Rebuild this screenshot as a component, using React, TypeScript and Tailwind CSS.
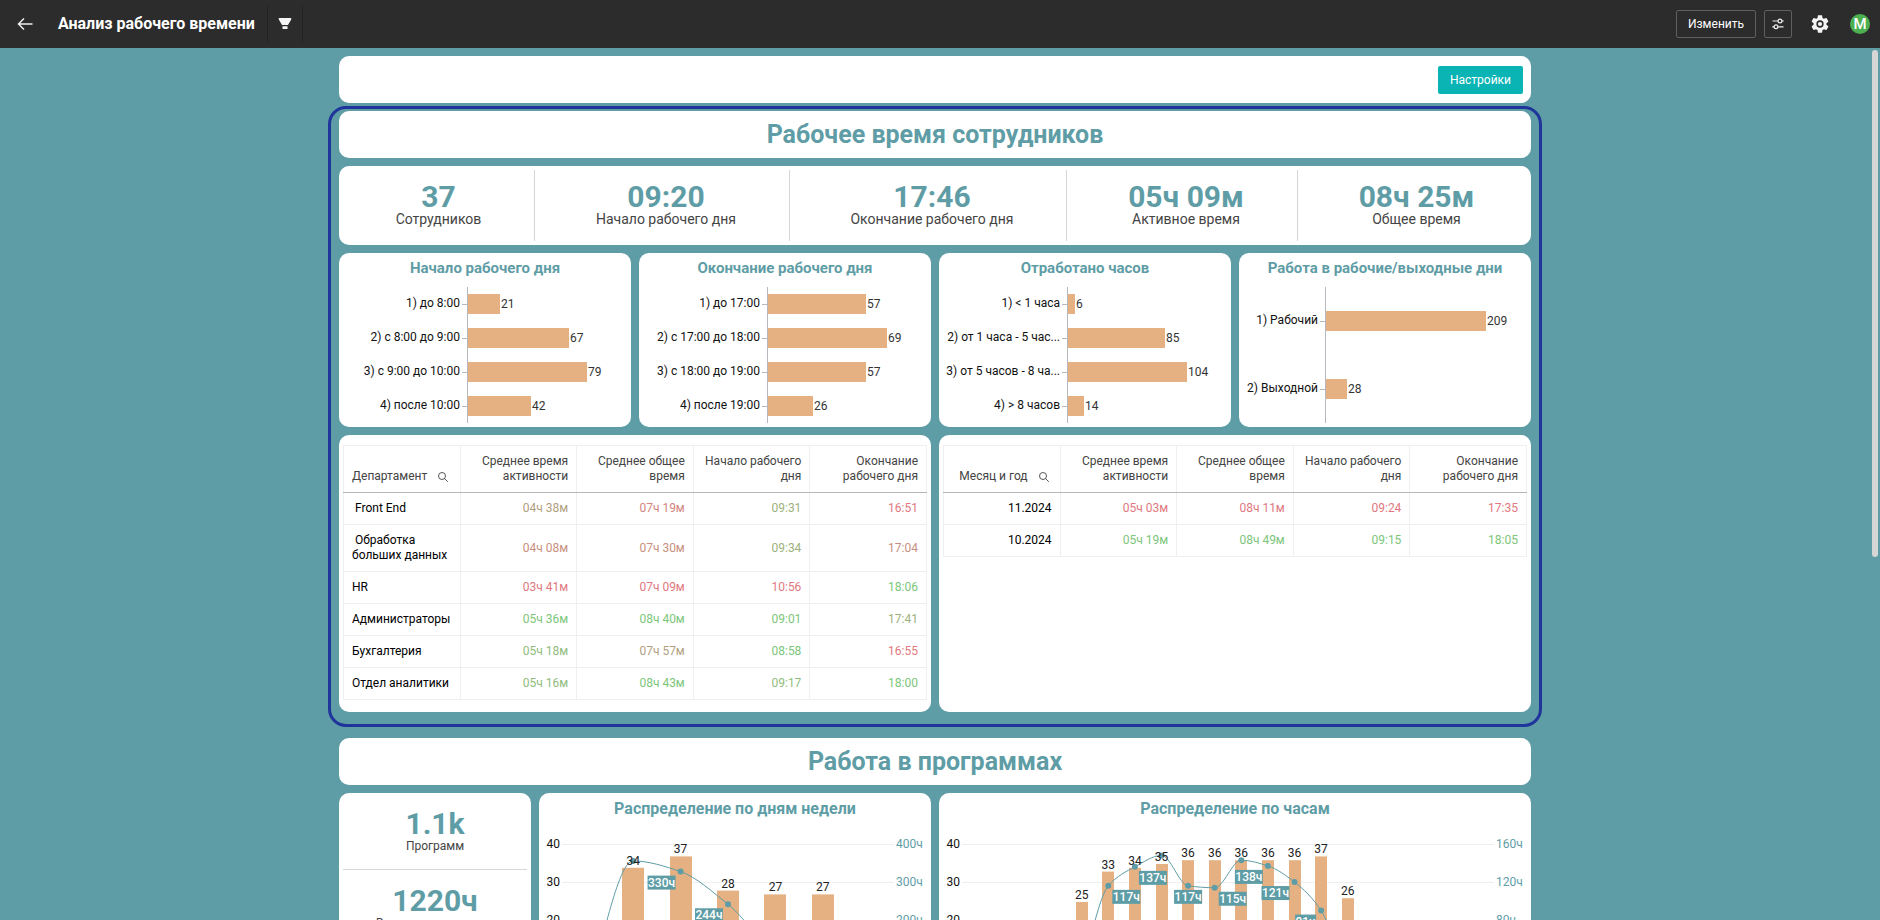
import { ReactNode } from "react";

interface BarItem {
  label: string;
  value: number;
}

interface LinePoint {
  band: number;
  value: number;
  label?: string;
  side?: "left" | "center" | "right";
}

const TEAL = "#5f9da6";
const SAND = "#e6b182";

const stats = [
  { value: "37", label: "Сотрудников" },
  { value: "09:20", label: "Начало рабочего дня" },
  { value: "17:46", label: "Окончание рабочего дня" },
  { value: "05ч 09м", label: "Активное время" },
  { value: "08ч 25м", label: "Общее время" },
];

const barCharts: { title: string; axis: number; span: number; items: BarItem[] }[] = [
  {
    title: "Начало рабочего дня",
    axis: 128,
    span: 119,
    items: [
      { label: "1) до 8:00", value: 21 },
      { label: "2) с 8:00 до 9:00", value: 67 },
      { label: "3) с 9:00 до 10:00", value: 79 },
      { label: "4) после 10:00", value: 42 },
    ],
  },
  {
    title: "Окончание рабочего дня",
    axis: 128,
    span: 119,
    items: [
      { label: "1) до 17:00", value: 57 },
      { label: "2) с 17:00 до 18:00", value: 69 },
      { label: "3) с 18:00 до 19:00", value: 57 },
      { label: "4) после 19:00", value: 26 },
    ],
  },
  {
    title: "Отработано часов",
    axis: 128,
    span: 119,
    items: [
      { label: "1) < 1 часа", value: 6 },
      { label: "2) от 1 часа - 5 час...", value: 85 },
      { label: "3) от 5 часов - 8 ча...", value: 104 },
      { label: "4) > 8 часов", value: 14 },
    ],
  },
  {
    title: "Работа в рабочие/выходные дни",
    axis: 86,
    span: 160,
    items: [
      { label: "1) Рабочий", value: 209 },
      { label: "2) Выходной", value: 28 },
    ],
  },
];

const tones = {
  red: "text-[#e17880]",
  rose: "text-[#d4837e]",
  clay: "text-[#c98f80]",
  sand: "text-[#b0a080]",
  olive: "text-[#9cb27c]",
  moss: "text-[#8fbc7d]",
  green: "text-[#7cc67a]",
};

type Tone = keyof typeof tones;
type Row = { name: string; cells: [string, Tone][] };

const departments: Row[] = [
  { name: " Front End", cells: [["04ч 38м", "sand"], ["07ч 19м", "rose"], ["09:31", "olive"], ["16:51", "red"]] },
  { name: " Обработка больших данных", cells: [["04ч 08м", "clay"], ["07ч 30м", "clay"], ["09:34", "olive"], ["17:04", "clay"]] },
  { name: "HR", cells: [["03ч 41м", "red"], ["07ч 09м", "red"], ["10:56", "red"], ["18:06", "green"]] },
  { name: "Администраторы", cells: [["05ч 36м", "green"], ["08ч 40м", "green"], ["09:01", "green"], ["17:41", "olive"]] },
  { name: "Бухгалтерия", cells: [["05ч 18м", "moss"], ["07ч 57м", "sand"], ["08:58", "green"], ["16:55", "red"]] },
  { name: "Отдел аналитики", cells: [["05ч 16м", "moss"], ["08ч 43м", "green"], ["09:17", "moss"], ["18:00", "green"]] },
];

const months: Row[] = [
  { name: "11.2024", cells: [["05ч 03м", "red"], ["08ч 11м", "red"], ["09:24", "red"], ["17:35", "red"]] },
  { name: "10.2024", cells: [["05ч 19м", "green"], ["08ч 49м", "green"], ["09:15", "green"], ["18:05", "green"]] },
];

const weekBars = [0, 34, 37, 28, 27, 27, 0];
const weekLine: LinePoint[] = [
  { band: 0, value: 4 },
  { band: 1, value: 358 },
  { band: 2, value: 330, label: "330ч", side: "left" },
  { band: 3, value: 244, label: "244ч", side: "left" },
  { band: 4, value: 130 },
  { band: 5, value: 110 },
  { band: 6, value: 4 },
];

const hourBars = [0, 0, 0, 0, 25, 33, 34, 35, 36, 36, 36, 36, 36, 37, 26, 0, 0, 0, 0, 0];
const hourLine: LinePoint[] = [
  { band: 4, value: 30 },
  { band: 5, value: 117, label: "117ч", side: "right" },
  { band: 6, value: 137, label: "137ч", side: "right" },
  { band: 7, value: 149 },
  { band: 8, value: 117, label: "117ч", side: "center" },
  { band: 9, value: 115, label: "115ч", side: "right" },
  { band: 10, value: 144 },
  { band: 11, value: 138, label: "138ч", side: "left" },
  { band: 12, value: 121, label: "121ч", side: "left" },
  { band: 13, value: 91, label: "91ч", side: "left" },
  { band: 14, value: 20 },
];

function Card({ className = "", children }: { className?: string; children?: ReactNode }) {
  return <div className={`rounded-[10px] bg-white ${className}`}>{children}</div>;
}

function SectionTitle({ children }: { children: ReactNode }) {
  return (
    <Card className="flex h-[47px] items-center justify-center">
      <h2 className="text-[25px] leading-8 font-bold text-[#5f9da6]">{children}</h2>
    </Card>
  );
}

function ChartTitle({ large, children }: { large?: boolean; children: ReactNode }) {
  return (
    <h3
      className={`text-center font-bold text-[#5f9da6] ${large ? "h-[31px] text-[16px] leading-8" : "h-[30px] text-[15px] leading-[30px]"}`}
    >
      {children}
    </h3>
  );
}

function BigValue({ children }: { children: ReactNode }) {
  return <div className="text-[30px] leading-[29px] font-bold text-[#5f9da6]">{children}</div>;
}

function BarChart({ axis, span, items }: { axis: number; span: number; items: BarItem[] }) {
  const max = Math.max(...items.map((i) => i.value));
  const band = 136 / items.length;

  return (
    <svg viewBox="0 0 292 144" className="block w-full text-xs">
      {items.map((item, i) => {
        const mid = Math.round(4 + band * (i + 0.5));
        const width = Math.round((item.value / max) * span);
        return (
          <g key={item.label}>
            <rect x={axis - 5} y={mid} width={5} height={1} fill="#b5b8bf" />
            <text x={axis - 7} y={mid + 3} textAnchor="end" fill="#111">
              {item.label}
            </text>
            <rect x={axis + 1} y={mid - 10} width={width} height={20} fill={SAND} />
            <text x={axis + width + 2} y={mid + 4} fill="#333">
              {item.value}
            </text>
          </g>
        );
      })}
      <rect x={axis} y={4} width={1} height={136} fill="#b5b8bf" />
    </svg>
  );
}

// monotone cubic through the points, so the curve never overshoots a peak
function smoothPath(pts: [number, number][]) {
  const slopes = pts.slice(1).map(([x, y], i) => (y - pts[i][1]) / (x - pts[i][0]));
  const tangents = pts.map((_, i) => {
    const a = slopes[i - 1];
    const b = slopes[i];
    if (a === undefined) return b;
    if (b === undefined) return a;
    return a * b <= 0 ? 0 : (2 * a * b) / (a + b);
  });
  return pts
    .map(([x, y], i) => {
      if (i === 0) return `M${x},${y}`;
      const [px, py] = pts[i - 1];
      const d = (x - px) / 3;
      return `C${px + d},${py + tangents[i - 1] * d} ${x - d},${y - tangents[i] * d} ${x},${y}`;
    })
    .join(" ");
}

interface ComboProps {
  width: number;
  bars: number[];
  barWidth: number;
  line: LinePoint[];
  lineStep: number;
}

function ComboChart({ width, bars, barWidth, line, lineStep }: ComboProps) {
  const left = 23;
  const right = width - 37;
  const band = (right - left) / bars.length;
  const cx = (i: number) => left + band * (i + 0.5);
  const yBar = (v: number) => 173 - v * 3.8;
  const yLine = (v: number) => 173 - (v / lineStep) * 38;

  return (
    <svg viewBox={`0 0 ${width} 200`} className="block w-full text-xs">
      {[40, 30, 20, 10, 0].map((v) => (
        <g key={v}>
          <rect x={left} y={yBar(v) - 1} width={right - left} height={1} fill="#efefef" />
          <text x={left - 2} y={yBar(v) + 3} textAnchor="end" fill="#111">
            {v}
          </text>
          <text x={right + 2} y={yBar(v) + 3} fill={TEAL}>
            {(v / 10) * lineStep}ч
          </text>
        </g>
      ))}
      {bars.map((v, i) =>
        v > 0 ? (
          <rect
            key={i}
            x={Math.round(cx(i) - barWidth / 2)}
            y={yBar(v)}
            width={barWidth}
            height={v * 3.8}
            fill={SAND}
          />
        ) : null,
      )}
      <path
        d={smoothPath(line.map((p) => [cx(p.band), yLine(p.value)]))}
        fill="none"
        stroke={TEAL}
      />
      {line.map((p) => (
        <circle key={p.band} cx={cx(p.band)} cy={yLine(p.value)} r={3} fill={TEAL} />
      ))}
      {bars.map((v, i) =>
        v > 0 ? (
          <text key={i} x={cx(i)} y={yBar(v) - 3} textAnchor="middle" fill="#222">
            {v}
          </text>
        ) : null,
      )}
      {line.map((p) => {
        if (!p.label) return null;
        const w = p.label.length * 7;
        const x = cx(p.band);
        const bx = p.side === "left" ? x - 5 - w : p.side === "right" ? x + 4 : x - w / 2;
        const by = yLine(p.value) + 4;
        return (
          <g key={p.band}>
            <rect x={bx} y={by} width={w} height={14} fill={TEAL} />
            <text x={bx + w / 2} y={by + 11} textAnchor="middle" fill="#fff" className="font-medium">
              {p.label}
            </text>
          </g>
        );
      })}
    </svg>
  );
}

function SearchIcon() {
  return (
    <svg viewBox="0 0 10 10" className="mr-[3px] size-[10px]" fill="none" stroke="#555">
      <circle cx="4" cy="4" r="3.5" />
      <path d="M6.5 6.5 9.8 9.8" />
    </svg>
  );
}

function TimeTable({ heading, rows, alignEnd }: { heading: string; rows: Row[]; alignEnd?: boolean }) {
  const cell = "border border-[#efefef] px-2 py-2";
  const columns = [
    "Среднее время активности",
    "Среднее общее время",
    "Начало рабочего дня",
    "Окончание рабочего дня",
  ];

  return (
    <table className="w-full table-fixed border-collapse text-xs leading-[15px]">
      <thead>
        <tr className="align-bottom text-[#444]">
          <th className={`${cell} border-b-[#b4b8b8] font-normal`}>
            <span className={`flex items-center gap-[11px] ${alignEnd ? "justify-end" : ""}`}>
              {heading}
              <SearchIcon />
            </span>
          </th>
          {columns.map((c) => (
            <th key={c} className={`${cell} border-b-[#b4b8b8] text-right font-normal`}>
              {c}
            </th>
          ))}
        </tr>
      </thead>
      <tbody>
        {rows.map((row) => (
          <tr key={row.name}>
            <td className={`${cell} whitespace-pre-wrap text-black ${alignEnd ? "text-right" : ""}`}>
              {row.name}
            </td>
            {row.cells.map(([text, tone], i) => (
              <td key={i} className={`${cell} text-right ${tones[tone]}`}>
                {text}
              </td>
            ))}
          </tr>
        ))}
      </tbody>
    </table>
  );
}

function Header() {
  return (
    <header className="flex h-12 shrink-0 items-center bg-[#2c2c2c] pr-[10px] pl-4 text-white">
      <button aria-label="Назад" className="flex size-[18px] items-center justify-center">
        <svg viewBox="0 0 18 18" className="size-[18px]" fill="none" stroke="#eee" strokeWidth="1.5">
          <path d="M16.5 9H2.5M8 3.5 2.5 9 8 14.5" />
        </svg>
      </button>
      <h1 className="ml-6 text-base font-bold">Анализ рабочего времени</h1>
      <div className="ml-3 flex h-9 w-9 items-center justify-center border-x border-[#222]">
        <button aria-label="Фильтры">
          <svg viewBox="0 0 14 14" className="size-[14px]" fill="#f5f5f5">
            <path d="M.8 1h12.400v1.500L10 8H4L.8 2.500zM4.500 9.200h5V12h-5z" />
          </svg>
        </button>
      </div>
      <div className="ml-auto flex items-center">
        <button className="h-7 w-20 rounded-xs border border-[#606060] text-xs">Изменить</button>
        <button
          aria-label="Параметры"
          className="ml-2 flex size-7 items-center justify-center rounded-xs border border-[#606060]"
        >
          <svg viewBox="0 0 12 12" className="size-3" fill="none" stroke="#eee" strokeWidth="1.200">
            <path d="M.5 3H6M10 3h1.700M.3 8.800H2M6 8.800h5.500" />
            <circle cx="8" cy="3" r="1.900" />
            <circle cx="4" cy="8.800" r="1.900" />
          </svg>
        </button>
        <button aria-label="Настройки системы" className="ml-[19px]">
          <svg viewBox="2 2 20 20" className="size-[18px]" fill="#f5f5f5">
            <path d="M19.140 12.940c.04-.3.060-.61.060-.94 0-.32-.02-.64-.07-.94l2.030-1.580c.18-.14.230-.41.120-.61l-1.920-3.320c-.12-.22-.37-.29-.59-.22l-2.390.96c-.5-.38-1.030-.7-1.620-.94l-.36-2.540c-.04-.24-.24-.41-.48-.41h-3.840c-.24 0-.43.170-.47.410l-.36 2.540c-.59.240-1.130.570-1.620.94l-2.390-.96c-.22-.08-.47 0-.59.220L2.740 8.870c-.12.210-.08.470.120.610l2.030 1.580c-.05.300-.09.630-.09.940s.02.640.070.940l-2.030 1.580c-.18.140-.23.410-.12.610l1.920 3.320c.12.220.37.290.59.220l2.390-.96c.5.380 1.030.700 1.620.94l.36 2.540c.05.240.240.410.480.410h3.840c.24 0 .44-.17.470-.41l.36-2.540c.59-.24 1.130-.56 1.620-.94l2.390.96c.22.080.470 0 .59-.22l1.920-3.320c.12-.22.070-.47-.12-.61l-2.010-1.580z" />
            <circle cx="12" cy="12" r="3.200" stroke="#2c2c2c" strokeWidth="1.700" />
          </svg>
        </button>
        <div className="ml-[21px] flex size-5 items-center justify-center rounded-full bg-[#4caf50] text-[15px] leading-5 font-medium">
          М
        </div>
      </div>
    </header>
  );
}

export default function App() {
  return (
    <div className="flex h-screen flex-col bg-[#5f9da6] font-[Roboto,sans-serif]">
      <Header />
      <div className="relative min-h-0 flex-1">
        <main className="h-full overflow-y-auto pt-2 pr-[10px] pb-4 [scrollbar-width:none]">
          <div className="mx-auto w-full max-w-[1214px]">
            <Card className="mx-[11px] flex h-[47px] items-center justify-end px-2">
              <button className="h-7 rounded-xs bg-[#0ab4b4] px-3 text-xs text-white">
                Настройки
              </button>
            </Card>

            <section className="mt-[3px] flex flex-col gap-2 rounded-[18px] border-3 border-[#1f359b] px-2 pt-[2px] pb-3">
              <SectionTitle>Рабочее время сотрудников</SectionTitle>

              <Card className="grid h-[79px] grid-cols-[192fr_255fr_277fr_231fr_229fr] divide-x divide-[#d6d6d6] p-1">
                {stats.map((s) => (
                  <div key={s.label} className="flex flex-col items-center pt-3 pl-2 first:pl-0">
                    <BigValue>{s.value}</BigValue>
                    <div className="text-sm leading-4 text-[#444]">{s.label}</div>
                  </div>
                ))}
              </Card>

              <div className="grid grid-cols-4 gap-2">
                {barCharts.map((c) => (
                  <Card key={c.title}>
                    <ChartTitle>{c.title}</ChartTitle>
                    <BarChart axis={c.axis} span={c.span} items={c.items} />
                  </Card>
                ))}
              </div>

              <div className="grid grid-cols-2 gap-2">
                <Card className="px-1 pt-[10px] pb-3">
                  <TimeTable heading="Департамент" rows={departments} />
                </Card>
                <Card className="px-1 pt-[10px] pb-3">
                  <TimeTable heading="Месяц и год" rows={months} alignEnd />
                </Card>
              </div>
            </section>

            <section className="mx-[11px] mt-[11px] flex flex-col gap-2">
              <SectionTitle>Работа в программах</SectionTitle>
              <div className="flex gap-2">
                <Card className="w-[192px] shrink-0 divide-y divide-[#d6d6d6] px-1">
                  {[
                    { value: "1.1k", label: "Программ" },
                    { value: "1220ч", label: "Время в программах" },
                  ].map((s) => (
                    <div key={s.label} className="flex h-[77px] flex-col items-center pt-4">
                      <BigValue>{s.value}</BigValue>
                      <div className="text-xs leading-4 text-[#444]">{s.label}</div>
                    </div>
                  ))}
                </Card>
                <Card className="min-w-0 flex-[392]">
                  <ChartTitle large>Распределение по дням недели</ChartTitle>
                  <ComboChart width={392} bars={weekBars} barWidth={22} line={weekLine} lineStep={100} />
                </Card>
                <Card className="min-w-0 flex-[592]">
                  <ChartTitle large>Распределение по часам</ChartTitle>
                  <ComboChart width={592} bars={hourBars} barWidth={12} line={hourLine} lineStep={40} />
                </Card>
              </div>
            </section>
          </div>
        </main>
        <div className="absolute top-[2px] right-[2px] h-[507px] w-[6px] rounded-full bg-[#d6d6d6]" />
      </div>
    </div>
  );
}
